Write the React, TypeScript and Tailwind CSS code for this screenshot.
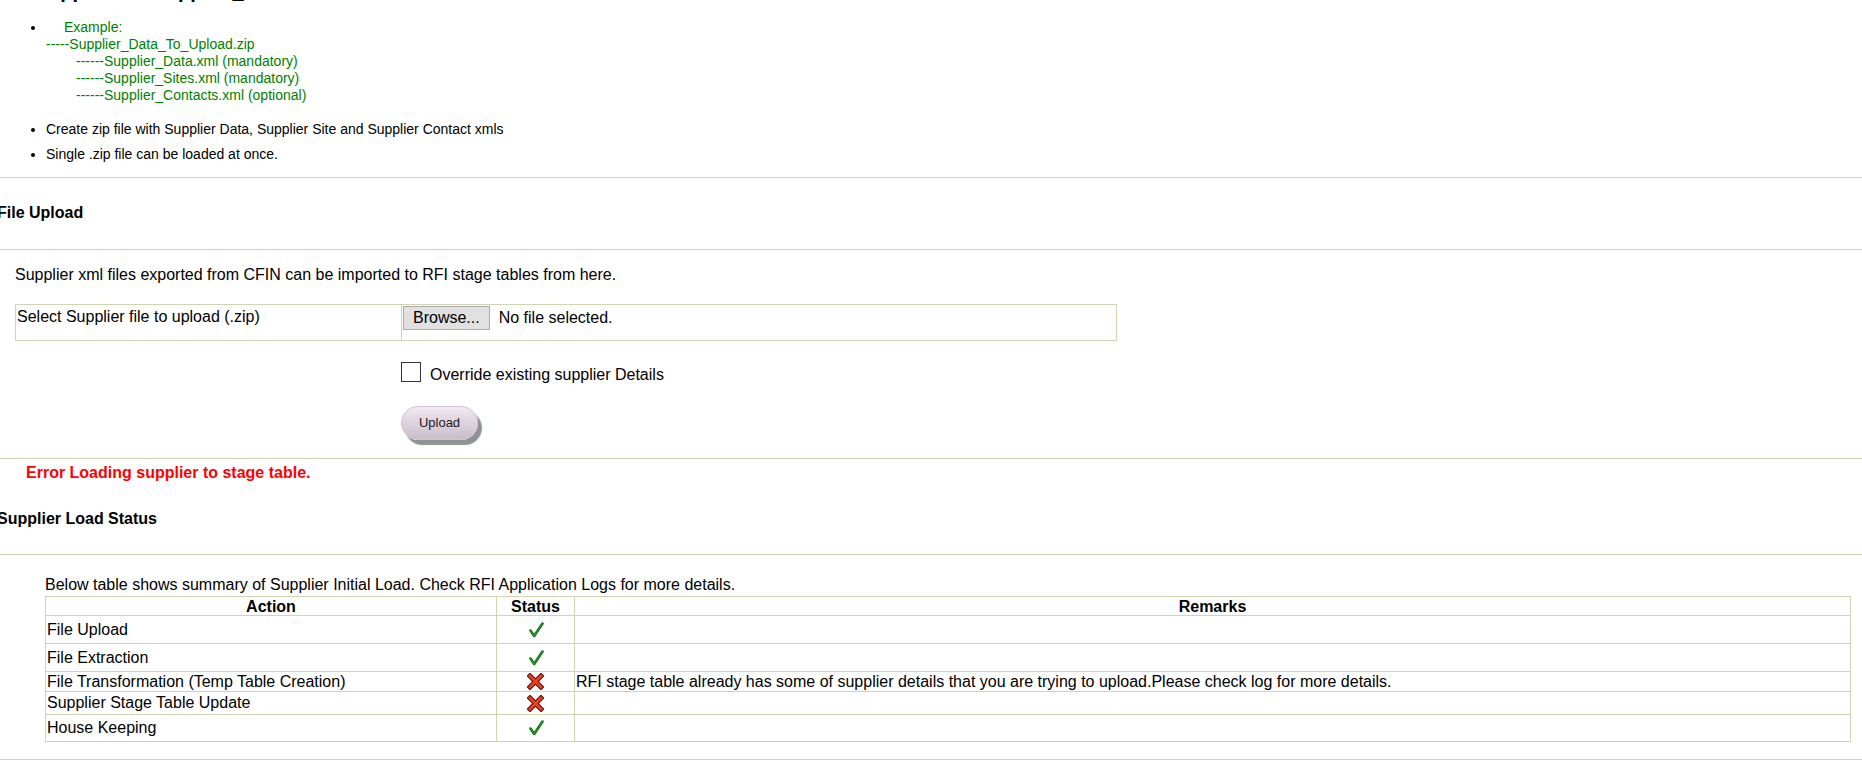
import React from "react";

const LINE = "border-[#d0d4b0]";

const Check = () => (
	<svg width="16" height="16" viewBox="0 0 16 16" className="inline-block">
		<path d="M2.5 8.5 L6.2 14 L14.5 1.5" fill="none" stroke="#0d5c0d" strokeWidth="2.6" strokeLinecap="round" strokeLinejoin="round" />
		<path d="M2.5 8.5 L6.2 14 L14.5 1.5" fill="none" stroke="#2aa02a" strokeWidth="1.3" strokeLinecap="round" strokeLinejoin="round" />
	</svg>
);

const Cross = () => (
	<svg width="17" height="17" viewBox="0 0 17 17" className="inline-block">
		<path d="M3 3 L14 14 M14 3 L3 14" fill="none" stroke="#5a1410" strokeWidth="5" strokeLinecap="square" />
		<path d="M3 3 L14 14 M14 3 L3 14" fill="none" stroke="#ee3f1f" strokeWidth="2.8" strokeLinecap="square" />
	</svg>
);

type Row = { action: string; ok: boolean; remark?: string; h: string };

const rows: Row[] = [
	{ action: "File Upload", ok: true, h: "h-[28px]" },
	{ action: "File Extraction", ok: true, h: "h-[28px]" },
	{
		action: "File Transformation (Temp Table Creation)",
		ok: false,
		remark:
			"RFI stage table already has some of supplier details that you are trying to upload.Please check log for more details.",
		h: "h-[20px]",
	},
	{ action: "Supplier Stage Table Update", ok: false, h: "h-[23px]" },
	{ action: "House Keeping", ok: true, h: "h-[27px]" },
];

export default function App() {
	return (
		<div className="h-[777px] w-full overflow-hidden bg-white text-black font-['Liberation_Sans',Arial,sans-serif]">
			{/* page title, scrolled mostly out of view */}
			<h1 className="-mt-[21px] -ml-[3px] whitespace-nowrap text-[20px] leading-[24px] font-bold">
				RFI Supplier for Supplier_Load
			</h1>

			<ul className="mt-[16px] list-disc pl-[46px] text-[14px] leading-[17px]">
				<li>
					<div className="text-[#008000]">
						<span className="pl-[18px]">Example:</span>
						<br />
						-----Supplier_Data_To_Upload.zip
						<div className="pl-[30px]">
							------Supplier_Data.xml (mandatory)
							<br />
							------Supplier_Sites.xml (mandatory)
							<br />
							------Supplier_Contacts.xml (optional)
						</div>
					</div>
				</li>
				<li className="mt-[17px]">Create zip file with Supplier Data, Supplier Site and Supplier Contact xmls</li>
				<li className="mt-[8px]">Single .zip file can be loaded at once.</li>
			</ul>

			<hr className={`mt-[14px] ${LINE}`} />

			<h3 className="mt-[25px] -ml-[3px] text-[16px] leading-[20px] font-bold">File Upload</h3>

			<hr className={`mt-[26px] ${LINE}`} />

			<p className="mt-[16px] pl-[15px] text-[16px] leading-[18px]">
				Supplier xml files exported from CFIN can be imported to RFI stage tables from here.
			</p>

			<table className={`mt-[20px] ml-[15px] w-[1102px] border-collapse border ${LINE} text-[16px]`}>
				<tbody>
					<tr className="h-[36px]">
						<td className={`w-[386px] border ${LINE} pl-[1px] pt-[3px] align-top leading-[18px]`}>
							Select Supplier file to upload (.zip)
						</td>
						<td className={`border ${LINE} pl-[1px] pt-[1px] align-top`}>
							<div className="flex items-center gap-[9px]">
								<button className="h-[24px] border border-[#adadad] bg-[#e1e1e1] px-[9px] text-[16px] leading-[20px] text-black">
									Browse...
								</button>
								<span className="leading-[18px]">No file selected.</span>
							</div>
						</td>
					</tr>
				</tbody>
			</table>

			<div className="mt-[21px] ml-[401px] flex items-start gap-[9px] text-[16px]">
				<div className="h-[20px] w-[20px] border border-[#333333] bg-white" />
				<span className="mt-[4px] leading-[18px]">Override existing supplier Details</span>
			</div>

			<div className="mt-[22px] ml-[401px]">
				<button className="h-[34px] w-[77px] rounded-full border border-[#d6bfd9] bg-gradient-to-b from-[#f1e9f1] to-[#c9bdcb] text-[13px] text-[#1a1a2a] shadow-[4px_5px_1px_#8b9494]">
					Upload
				</button>
			</div>

			<hr className={`mt-[18px] ${LINE}`} />

			<p className="mt-[5px] pl-[26px] text-[16px] leading-[18px] font-bold text-[#ff0000]">
				Error Loading supplier to stage table.
			</p>

			<h3 className="mt-[28px] -ml-[3px] text-[16px] leading-[18px] font-bold">Supplier Load Status</h3>

			<hr className={`mt-[26px] ${LINE}`} />

			<div className="ml-[45px] mr-[11px] text-[16px]">
				<p className="mt-[21px] leading-[18px]">
					Below table shows summary of Supplier Initial Load. Check RFI Application Logs for more details.
				</p>
				<table className={`mt-[2px] w-full table-fixed border-collapse border ${LINE}`}>
					<colgroup>
						<col className="w-[451px]" />
						<col className="w-[78px]" />
						<col />
					</colgroup>
					<thead>
						<tr className="h-[19px]">
							<th className={`border ${LINE} leading-[17px] font-bold`}>Action</th>
							<th className={`border ${LINE} leading-[17px] font-bold`}>Status</th>
							<th className={`border ${LINE} leading-[17px] font-bold`}>Remarks</th>
						</tr>
					</thead>
					<tbody>
						{rows.map((r) => (
							<tr key={r.action} className={r.h}>
								<td className={`border ${LINE} pl-[1px] leading-[18px] whitespace-nowrap`}>{r.action}</td>
								<td className={`border ${LINE} text-center leading-[0]`}>{r.ok ? <Check /> : <Cross />}</td>
								<td className={`border ${LINE} pl-[1px] leading-[18px] whitespace-nowrap`}>{r.remark}</td>
							</tr>
						))}
					</tbody>
				</table>
			</div>

			<hr className={`mt-[17px] ${LINE}`} />
		</div>
	);
}
